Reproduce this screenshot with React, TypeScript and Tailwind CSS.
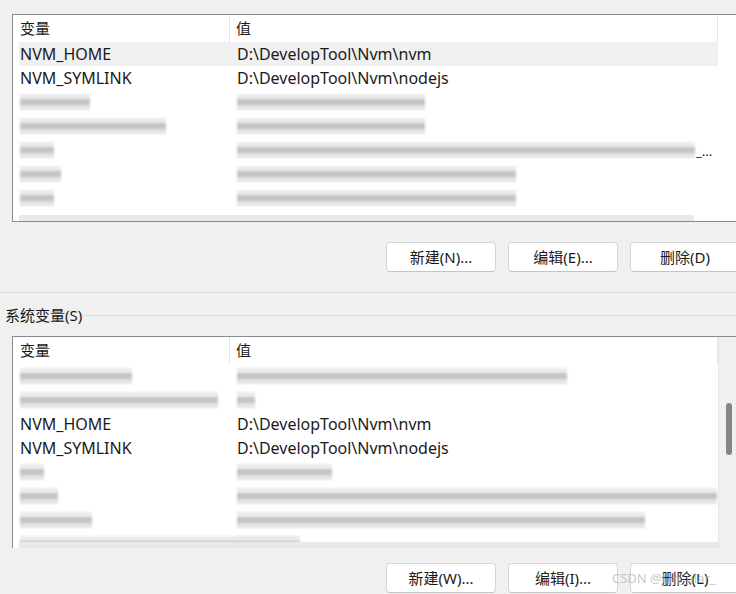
import React from 'react';

const font = { fontFamily: '"Noto Sans", "Noto Sans CJK SC", sans-serif' };

interface Row {
  name?: string;
  value?: string;
  nameW?: number;
  valueW?: number;
  selected?: boolean;
  ellipsis?: boolean;
}

const topRows: Row[] = [
  { name: 'NVM_HOME', value: 'D:\\DevelopTool\\Nvm\\nvm', selected: true },
  { name: 'NVM_SYMLINK', value: 'D:\\DevelopTool\\Nvm\\nodejs' },
  { nameW: 70, valueW: 188 },
  { nameW: 146, valueW: 188 },
  { nameW: 34, valueW: 458, ellipsis: true },
  { nameW: 41, valueW: 279 },
  { nameW: 34, valueW: 279 },
];

const sysRows: Row[] = [
  { nameW: 112, valueW: 330 },
  { nameW: 198, valueW: 18 },
  { name: 'NVM_HOME', value: 'D:\\DevelopTool\\Nvm\\nvm' },
  { name: 'NVM_SYMLINK', value: 'D:\\DevelopTool\\Nvm\\nodejs' },
  { nameW: 24, valueW: 95 },
  { nameW: 38, valueW: 480 },
  { nameW: 72, valueW: 408 },
  { nameW: 280, valueW: 60 },
];

// mosaic stand-in for pixelated text
const Blur = ({ w }: { w: number }) => (
  <div className="h-[16px] flex flex-col blur-[0.8px]" style={{ width: w }}>
    <div className="h-[5px] bg-[#ebebed]" />
    <div className="h-[6px] bg-[#c4c4c8]" />
    <div className="h-[5px] bg-[#e4e4e6]" />
  </div>
);

const Header = () => (
  <div className="flex h-[27px] items-center text-[15px] text-[#1a1a1a] w-[699px]">
    <div className="w-[211px] pl-[1px] h-full flex items-center border-r border-[#e5e5e5]">变量</div>
    <div className="flex-1 pl-[6px] h-full flex items-center border-r border-[#e5e5e5]">值</div>
  </div>
);

const ListRow = ({ r }: { r: Row }) => (
  <div className={`flex h-[24px] items-center text-[16px] text-[#1a1a1a] w-[699px] ${r.selected ? 'bg-[#f0f0f0]' : ''}`}>
    <div className="w-[211px] pl-[1px]">{r.name ?? <Blur w={r.nameW ?? 40} />}</div>
    <div className="flex-1 pl-[7px] flex items-end">
      {r.value ?? <Blur w={r.valueW ?? 100} />}
      {r.ellipsis && <span className="text-[13px] leading-none ml-[1px]">_...</span>}
    </div>
  </div>
);

const Btn = ({ label }: { label: string }) => (
  <button className="w-[110px] h-[30px] shrink-0 bg-white border border-[#d6d6d6] border-b-[#c4c4c4] rounded-[4px] text-[15px] text-[#1a1a1a] flex items-center justify-center">
    {label}
  </button>
);

export default function App() {
  return (
    <div className="w-[736px] h-[594px] overflow-hidden bg-[#f0f0f0] relative" style={font}>
      <div className="pt-[14px] pl-[12px]">
        <div className="w-[740px] h-[208px] bg-white border border-r-0 border-[#868a92] pl-[6px] flex flex-col">
          <Header />
          {topRows.map((r, i) => <ListRow key={i} r={r} />)}
          <div className="mt-auto h-[6px] w-[675px] bg-[#e9e9eb]" />
        </div>
      </div>

      <div className="flex gap-[12px] pl-[386px] mt-[20px]">
        <Btn label="新建(N)..." />
        <Btn label="编辑(E)..." />
        <Btn label="删除(D)" />
      </div>

      <div className="mt-[20px] h-px bg-[#dadada]" />

      <div className="flex items-center h-[20px] mt-[12px]">
        <span className="ml-[5px] text-[15px] text-[#1a1a1a] leading-none">系统变量(S)</span>
        <div className="flex-1 h-px bg-[#dadada] ml-[3px]" />
      </div>

      <div className="pl-[12px] mt-[11px]">
        <div className="w-[740px] h-[212px] bg-white border border-r-0 border-b-0 border-[#868a92] flex overflow-hidden">
          <div className="w-[705px] pl-[6px] flex flex-col overflow-hidden">
            <Header />
            <div className="h-[179px] overflow-hidden">
              {sysRows.map((r, i) => <ListRow key={i} r={r} />)}
            </div>
            <div className="h-[6px] bg-[#e9e9eb]" />
          </div>
          <div className="w-[18px] h-full bg-[#f0f0f0] border-l border-[#e5e5e5] relative">
            <div className="absolute left-[7px] top-[66px] w-[6px] h-[52px] rounded-full bg-[#858585]" />
          </div>
        </div>
      </div>

      <div className="flex gap-[12px] pl-[386px] mt-[15px]">
        <Btn label="新建(W)..." />
        <Btn label="编辑(I)..." />
        <Btn label="删除(L)" />
      </div>

      <div className="absolute left-[612px] top-[569px] text-[13px] text-[#b0b0b0]/70 pointer-events-none">
        CSDN @Lin_ular_
      </div>
    </div>
  );
}
